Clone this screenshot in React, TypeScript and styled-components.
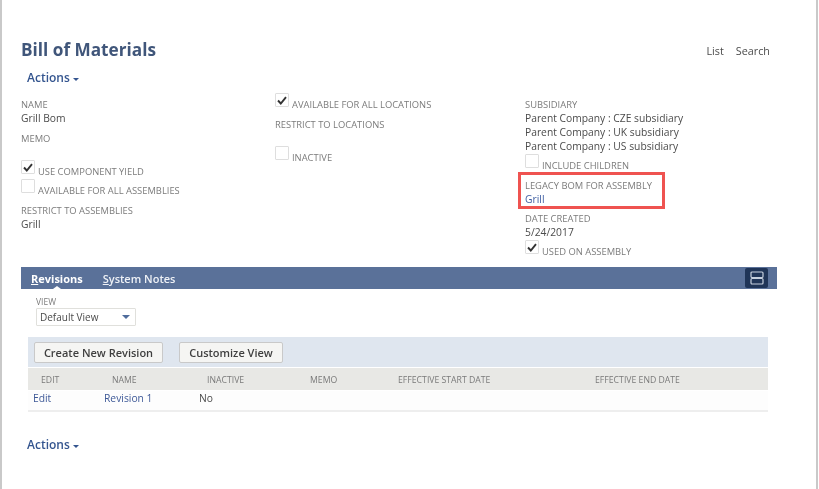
import * as React from "react";
import styled, { createGlobalStyle } from "styled-components";

const GlobalStyle = createGlobalStyle`
  html, body {
    margin: 0;
    padding: 0;
    background: #fff;
    overflow: hidden;
  }
  body {
    font-family: "Open Sans", "Liberation Sans", sans-serif;
  }
`;

const Page = styled.div`
  box-sizing: border-box;
  width: 818px;
  height: 489px;
  border-left: 2px solid #c9c9c9;
  border-right: 2px solid #c9c9c9;
  padding: 39px 39px 0 19px;
  color: #4a4a4a;
  filter: blur(0.35px);
`;

const Header = styled.div`
  display: flex;
  justify-content: space-between;
  align-items: flex-start;
  height: 21px;
`;

const Title = styled.h1`
  margin: 0;
  font-size: 17.2px;
  line-height: 21px;
  font-weight: 700;
  color: #40567a;
`;

const HeaderLinks = styled.div`
  display: flex;
  gap: 12px;
  padding: 5px 7px 0 0;
  font-size: 10.8px;
  line-height: 14px;
  color: #4c4c4c;
`;

const ActionsLink = styled.div<{ $top: number }>`
  display: flex;
  align-items: center;
  gap: 3px;
  margin: ${(p) => p.$top}px 0 0 6px;
  font-size: 12px;
  line-height: 16px;
  font-weight: 600;
  color: #34558f;

  &::after {
    content: "";
    margin-top: 2px;
    border-left: 3px solid transparent;
    border-right: 3px solid transparent;
    border-top: 3px solid #34558f;
  }
`;

const Fields = styled.div`
  display: grid;
  grid-template-columns: 254px 250px 1fr;
  height: 175px;
  margin-top: 6px;
`;

const Column = styled.div`
  display: flex;
  flex-direction: column;
  align-items: flex-start;
`;

const Label = styled.div<{ $top?: number }>`
  margin-top: ${(p) => p.$top ?? 0}px;
  font-size: 9.4px;
  line-height: 13px;
  color: #7b7b7b;
  text-transform: uppercase;
  white-space: nowrap;
`;

const Value = styled.div`
  font-size: 10.3px;
  line-height: 14px;
  color: #4b4b4b;
  white-space: nowrap;
`;

const LinkValue = styled(Value)`
  color: #3f5fa3;
`;

const CheckRow = styled.div<{ $top?: number }>`
  display: flex;
  align-items: flex-end;
  gap: 3px;
  margin-top: ${(p) => p.$top ?? 0}px;
  height: 16px;
`;

const Box = styled.span`
  box-sizing: border-box;
  display: flex;
  align-items: center;
  justify-content: center;
  width: 14px;
  height: 14px;
  margin-bottom: 4px;
  border: 1px solid #dedede;
  border-radius: 1px;
  background: #fff;
`;

const Highlight = styled.div`
  box-sizing: border-box;
  align-self: flex-start;
  width: 147px;
  height: 37px;
  margin: 0 0 0 -7px;
  padding: 4px 0 0 4px;
  border: 3px solid #ef5350;
`;

const TabBar = styled.div`
  display: flex;
  align-items: center;
  gap: 20px;
  height: 22px;
  padding: 0 9px 0 10px;
  background: #5a7199;
  box-sizing: border-box;
`;

const Tab = styled.div<{ $active?: boolean }>`
  position: relative;
  padding-top: 1px;
  font-size: 11px;
  line-height: 21px;
  font-weight: ${(p) => (p.$active ? 700 : 600)};
  color: ${(p) => (p.$active ? "#fff" : "#eef1f6")};

  &:first-letter {
    text-decoration: underline;
  }

  ${(p) =>
    p.$active &&
    `
    &::after {
      content: "";
      position: absolute;
      left: 50%;
      bottom: 0;
      margin-left: -4px;
      border-left: 4px solid transparent;
      border-right: 4px solid transparent;
      border-bottom: 3px solid #fff;
    }
  `}
`;

const ToggleButton = styled.div`
  display: flex;
  align-items: center;
  justify-content: center;
  width: 23px;
  height: 20px;
  margin-left: auto;
  border-radius: 2px;
  background: #203558;
`;

const ViewBlock = styled.div`
  margin: 7px 0 0 15px;
`;

const ViewLabel = styled(Label)`
  font-size: 8.5px;
  line-height: 12px;
`;

const Select = styled.div`
  box-sizing: border-box;
  display: flex;
  align-items: center;
  justify-content: space-between;
  width: 100px;
  height: 18px;
  padding: 0 5px 0 3px;
  border: 1px solid #e0e0dc;
  border-radius: 1px;
  font-size: 10px;
  color: #4b4b4b;

  &::after {
    content: "";
    border-left: 4px solid transparent;
    border-right: 4px solid transparent;
    border-top: 4px solid #4f6c9c;
  }
`;

const ListBlock = styled.div`
  margin: 11px 9px 0 7px;
`;

const ButtonBar = styled.div`
  display: flex;
  align-items: center;
  gap: 16px;
  height: 30px;
  margin-bottom: 1px;
  padding: 0 6px;
  background: #dfe6ef;
`;

const Button = styled.div<{ $width: number }>`
  box-sizing: border-box;
  display: flex;
  align-items: center;
  justify-content: center;
  width: ${(p) => p.$width}px;
  height: 21px;
  border: 1px solid #c9c9c9;
  border-radius: 2px;
  background: #f5f5f3;
  font-size: 11px;
  font-weight: 600;
  color: #3f3f3f;
`;

const Grid = styled.div`
  display: grid;
  grid-template-columns: 71px 95px 103px 88px 197px 1fr;
  padding-left: 5px;
  align-items: center;
`;

const HeadRow = styled(Grid)`
  height: 22px;
  margin-bottom: 1px;
  background: #e8e8e5;
`;

const HeadCell = styled.div`
  padding: 1px 0 0 8px;
  font-size: 8.7px;
  color: #7a7a7a;
  text-transform: uppercase;
  white-space: nowrap;
`;

const DataRow = styled(Grid)`
  box-sizing: border-box;
  height: 21px;
  align-items: flex-start;
  background: #fdfdfd;
  border-bottom: 2px solid #eeeeee;
`;

const Cell = styled.div<{ $link?: boolean }>`
  font-size: 10.3px;
  line-height: 14px;
  color: ${(p) => (p.$link ? "#3f5a98" : "#4b4b4b")};
`;

const Check: React.FC<{ checked?: boolean }> = ({ checked }) => (
  <Box>
    {checked && (
      <svg width="10" height="9" viewBox="0 0 10 9">
        <path d="M1 4.5 L3.8 7.5 L9 1.2" fill="none" stroke="#333" strokeWidth="1.9" />
      </svg>
    )}
  </Box>
);

const CheckField: React.FC<{ label: string; checked?: boolean; top?: number }> = ({ label, checked, top }) => (
  <CheckRow $top={top}>
    <Check checked={checked} />
    <Label>{label}</Label>
  </CheckRow>
);

export default function App() {
  return (
    <Page>
      <GlobalStyle />
      <Header>
        <Title>Bill of Materials</Title>
        <HeaderLinks>
          <span>List</span>
          <span>Search</span>
        </HeaderLinks>
      </Header>
      <ActionsLink $top={10}>Actions</ActionsLink>
      <Fields>
        <Column>
          <Label $top={6}>Name</Label>
          <Value>Grill Bom</Value>
          <Label $top={7}>Memo</Label>
          <CheckField label="Use Component Yield" checked top={17} />
          <CheckField label="Available for All Assemblies" top={3} />
          <Label $top={7}>Restrict to Assemblies</Label>
          <Value>Grill</Value>
        </Column>
        <Column>
          <CheckField label="Available for All Locations" checked top={3} />
          <Label $top={7}>Restrict to Locations</Label>
          <CheckField label="Inactive" top={17} />
        </Column>
        <Column>
          <Label $top={6}>Subsidiary</Label>
          <Value>Parent Company : CZE subsidiary</Value>
          <Value>Parent Company : UK subsidiary</Value>
          <Value>Parent Company : US subsidiary</Value>
          <CheckField label="Include Children" top={3} />
          <Highlight>
            <Label>Legacy BOM for Assembly</Label>
            <LinkValue>Grill</LinkValue>
          </Highlight>
          <Label $top={3}>Date Created</Label>
          <Value>5/24/2017</Value>
          <CheckField label="Used on Assembly" checked top={3} />
        </Column>
      </Fields>
      <TabBar>
        <Tab $active>Revisions</Tab>
        <Tab>System Notes</Tab>
        <ToggleButton>
          <svg width="14" height="14" viewBox="0 0 14 14">
            <rect x="1" y="1" width="12" height="5.5" rx="1" fill="none" stroke="#c6cfdd" strokeWidth="1.2" />
            <rect x="1" y="7.5" width="12" height="5.5" rx="1" fill="none" stroke="#c6cfdd" strokeWidth="1.2" />
          </svg>
        </ToggleButton>
      </TabBar>
      <ViewBlock>
        <ViewLabel>View</ViewLabel>
        <Select>Default View</Select>
      </ViewBlock>
      <ListBlock>
        <ButtonBar>
          <Button $width={129}>Create New Revision</Button>
          <Button $width={104}>Customize View</Button>
        </ButtonBar>
        <HeadRow>
          <HeadCell>Edit</HeadCell>
          <HeadCell>Name</HeadCell>
          <HeadCell>Inactive</HeadCell>
          <HeadCell>Memo</HeadCell>
          <HeadCell>Effective Start Date</HeadCell>
          <HeadCell>Effective End Date</HeadCell>
        </HeadRow>
        <DataRow>
          <Cell $link>Edit</Cell>
          <Cell $link>Revision 1</Cell>
          <Cell>No</Cell>
        </DataRow>
      </ListBlock>
      <ActionsLink $top={25}>Actions</ActionsLink>
    </Page>
  );
}
